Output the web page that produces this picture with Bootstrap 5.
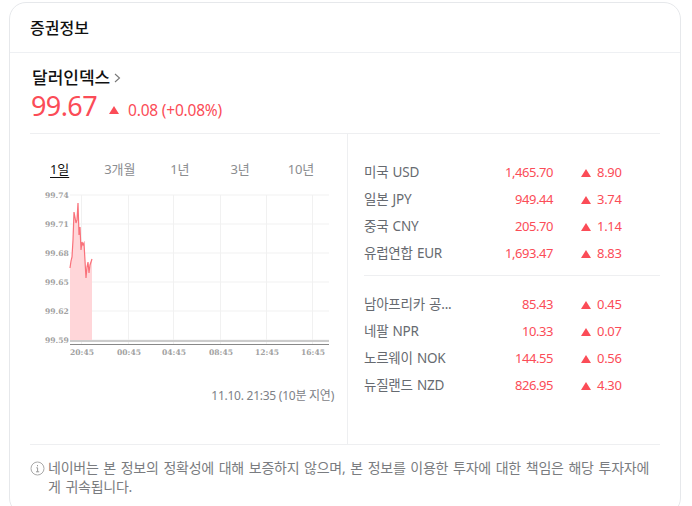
<!DOCTYPE html>
<html lang="ko">
<head>
    <meta charset="UTF-8">
    <meta name="viewport" content="width=device-width, initial-scale=1.0">
    <title>증권정보</title>
    <link href="https://cdn.jsdelivr.net/npm/bootstrap@5.3.0/dist/css/bootstrap.min.css" rel="stylesheet">
    <style>
        body {
            font-family: "Noto Sans", "Noto Sans CJK KR", sans-serif;
            background: #fff;
        }
        .page-clip {
            height: 506px;
            overflow: hidden;
            padding: 2px 11px 0 9px;
        }
        .info-card {
            border: 1px solid #e6e8eb;
            border-radius: 17px;
            height: 513px;
        }
        .info-head {
            height: 50px;
            padding: 0 20px;
            border-bottom: 1px solid #eef0f3;
            font-size: 16px;
            font-weight: 500;
            color: #111;
        }
        .info-body { padding: 0 20px; }
        .index-box {
            height: 81px;
            padding-top: 14px;
            border-bottom: 1px solid #eeeff1;
        }
        .index-name { font-size: 17px; font-weight: 500; line-height: 22px; color: #111; padding-left: 2px; }
        .index-name svg { margin-left: 4px; }
        .index-price { margin-top: 2px; height: 30px; color: #fb4c57; padding-left: 1px; }
        .price-now { font-size: 27px; line-height: 30px; letter-spacing: -.6px; }
        .price-diff { font-size: 15.5px; letter-spacing: -.2px; margin-top: 9px; }
        .price-tri { margin: 7px 9px 0 12px; }
        .market-row { height: 311px; border-bottom: 1px solid #eeeff1; }
        .chart-side { width: 318px; flex: none; border-right: 1px solid #eeeff1; padding-top: 26px; }
        .period-tabs { height: 24px; padding-left: 20px; font-size: 13px; color: #8b8d90; }
        .period-tabs span { display: block; letter-spacing: -.1px; }
        .period-tabs .on { color: #111; text-decoration: underline; text-underline-offset: 3px; }
        .chart-svg { display: block; margin: 6px 0 0 10px; }
        .chart-svg text { font-family: "DejaVu Serif", serif; font-size: 7.6px; font-weight: 700; fill: #a2a2a2; }
        .chart-time { font-size: 12px; color: #7d8187; text-align: right; padding-right: 13px; margin-top: 25px; letter-spacing: -.25px; }
        .rate-side { padding: 25px 0 0 16px; flex-grow: 1; }
        .rate-list { height: 108px; }
        .rate-list + .rate-list { margin-top: 8px; border-top: 1px solid #eeeff1; padding-top: 15px; height: 124px; }
        .rate-item { height: 27px; font-size: 13px; }
        .rate-name { width: 110px; color: #666a70; white-space: nowrap; overflow: hidden; font-size: 13.5px; letter-spacing: -.25px; word-spacing: 1px; }
        .rate-price { width: 79px; text-align: right; color: #fb4c57; letter-spacing: -.45px; }
        .rate-diff { margin-left: 28px; color: #fb4c57; letter-spacing: -.3px; }
        .tri { width: 0; height: 0; border-left: 5.5px solid transparent; border-right: 5.5px solid transparent; border-bottom: 8px solid #fb4c57; display: inline-block; }
        .rate-diff .tri { margin-right: 6px; }
        .notice { padding-top: 13px; font-size: 14px; line-height: 19px; color: #7a7c80; letter-spacing: -.25px; word-spacing: 1.4px; }
        .notice svg { flex: none; margin: 3px 3px 0 0; }
    </style>
</head>
<body>
    <div class="page-clip">
    <div class="info-card">
        <div class="info-head d-flex align-items-center">증권정보</div>
        <div class="info-body">
            <div class="index-box">
                <div class="index-name d-flex align-items-center">달러인덱스
                    <svg width="7" height="10" viewBox="0 0 7 10"><path d="M1 1l4.5 4L1 9" fill="none" stroke="#777" stroke-width="1.1"/></svg>
                </div>
                <div class="index-price d-flex align-items-center">
                    <span class="price-now">99.67</span>
                    <span class="tri price-tri"></span>
                    <span class="price-diff">0.08 (+0.08%)</span>
                </div>
            </div>
            <div class="market-row d-flex">
                <div class="chart-side">
                    <div class="period-tabs d-flex">
                        <span class="on">1일</span>
                        <span style="margin-left:35px">3개월</span>
                        <span style="margin-left:35px">1년</span>
                        <span style="margin-left:41px">3년</span>
                        <span style="margin-left:38px">10년</span>
                    </div>
                    <svg id="chart" class="chart-svg" width="300" height="172" viewBox="40 190 300 172"></svg>
                    <div class="chart-time">11.10. 21:35 (10분 지연)</div>
                </div>
                <div class="rate-side">
                    <div class="rate-list" id="rateTop"></div>
                    <div class="rate-list" id="rateBottom"></div>
                </div>
            </div>
            <div class="notice d-flex">
                <svg width="15" height="15" viewBox="0 0 15 15"><circle cx="7.5" cy="7.5" r="6.5" fill="none" stroke="#aaa"/><path d="M7.5 4v1.3M6.3 6.8h1.3v4M6 10.8h3.2" fill="none" stroke="#999"/></svg>
                <div>네이버는 본 정보의 정확성에 대해 보증하지 않으며, 본 정보를 이용한 투자에 대한 책임은 해당 투자자에게 귀속됩니다.</div>
            </div>
        </div>
    </div>
    </div>

    <script src="https://cdn.jsdelivr.net/npm/bootstrap@5.3.0/dist/js/bootstrap.bundle.min.js"></script>
    <script>
        const topRates = [
            ['미국 USD', '1,465.70', '8.90'],
            ['일본 JPY', '949.44', '3.74'],
            ['중국 CNY', '205.70', '1.14'],
            ['유럽연합 EUR', '1,693.47', '8.83'],
        ];
        const bottomRates = [
            ['남아프리카 공...', '85.43', '0.45'],
            ['네팔 NPR', '10.33', '0.07'],
            ['노르웨이 NOK', '144.55', '0.56'],
            ['뉴질랜드 NZD', '826.95', '4.30'],
        ];

        function renderRates(id, rates) {
            document.getElementById(id).innerHTML = rates.map(r => `
                <div class="rate-item d-flex align-items-center">
                    <div class="rate-name">${r[0]}</div>
                    <div class="rate-price">${r[1]}</div>
                    <div class="rate-diff d-flex align-items-center"><span class="tri"></span>${r[2]}</div>
                </div>`).join('');
        }

        function renderChart() {
            // zoomed trace of the line, in page pixels
            const trace = [[70,268],[71,261],[72,257],[73,240],[74,212],[76,223],[77,220],[78,203],[79,235],[80,227],[81,250],[82,242],[83,245],[84,243],[84.5,252],[86,278],[87,267],[88,262],[89,273],[90,265],[92,259]];
            const line = trace.map(p => p.join(',')).join(' ');
            let s = '';
            [[195,'99.74'],[224,'99.71'],[253,'99.68'],[282,'99.65'],[311,'99.62'],[340,'99.59']].forEach(g => {
                s += `<line x1="70" x2="329" y1="${g[0]}" y2="${g[0]}" stroke="#f1f1f1"/>`;
                s += `<text x="45" y="${g[0] + 3}">${g[1]}</text>`;
            });
            [[81,'20:45'],[128,'00:45'],[173,'04:45'],[220,'08:45'],[266,'12:45'],[312,'16:45']].forEach(g => {
                s += `<line x1="${g[0]}.5" x2="${g[0]}.5" y1="195" y2="344" stroke="#f1f1f1"/>`;
                s += `<text x="${g[0] + 1}" y="355" text-anchor="middle">${g[1]}</text>`;
            });
            s += `<polygon points="70,341 ${line} 92,341" fill="#ffd6d9"/>`;
            s += `<polyline points="${line}" fill="none" stroke="#f9717a" stroke-width="1.2"/>`;
            s += `<rect x="70" y="340" width="259" height="2" fill="#ccc"/>`;
            s += `<rect x="70" y="344" width="259" height="1" fill="#888"/>`;
            document.getElementById('chart').innerHTML = s;
        }

        renderRates('rateTop', topRates);
        renderRates('rateBottom', bottomRates);
        renderChart();
    </script>
</body>
</html>
